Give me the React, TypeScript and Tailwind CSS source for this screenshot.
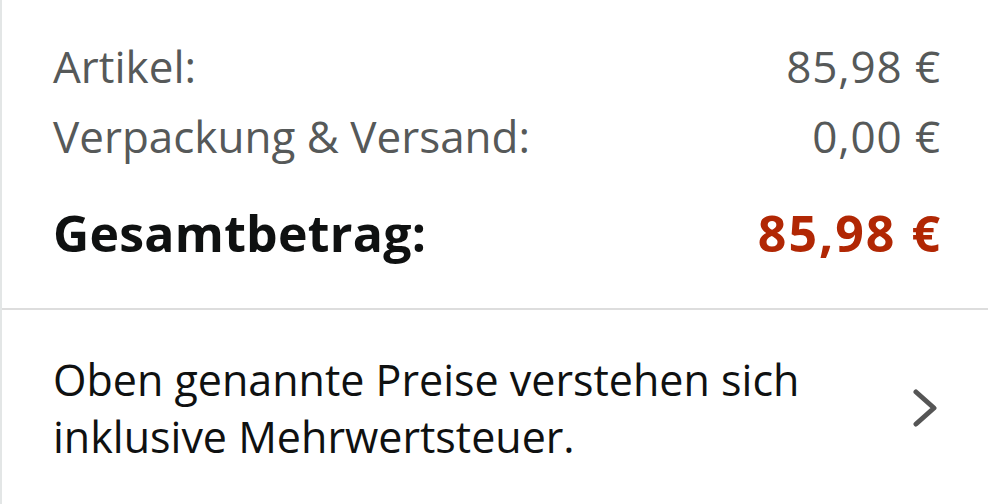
import React from 'react';

// Order summary block (prices incl. VAT)
const rows = [
  { label: 'Artikel:', value: '85,98 €' },
  { label: 'Verpackung & Versand:', value: '0,00 €' },
];

export default function App() {
  return (
    <div
      className="w-full h-[504px] bg-white border-l-2 border-[#e3e6e6] flex flex-col"
      style={{ fontFamily: '"Open Sans", "Noto Sans", sans-serif' }}
    >
      {/* Totals */}
      <div className="pl-[51px] pr-[48px] pt-[31px] pb-[45px]">
        {rows.map((row) => (
          <div key={row.label} className="flex justify-between text-[44px] leading-[70px] text-[#565959]">
            <span>{row.label}</span>
            <span className="tracking-[0.02em] -mr-[1px]">{row.value}</span>
          </div>
        ))}
        <div className="mt-[32px] flex justify-between text-[50px] leading-[60px] font-bold">
          <span className="text-[#0f1111] tracking-[0.005em]">Gesamtbetrag:</span>
          <span className="text-[#b12704] tracking-[0.04em] -mr-[2px]">85,98 €</span>
        </div>
      </div>

      <div className="h-[2px] bg-[#dddddd]" />

      {/* VAT note */}
      <div className="pl-[51px] pr-[51px] pt-[41px] flex items-center justify-between">
        <p className="text-[43px] leading-[57px] text-[#0f1111]">
          Oben genannte Preise verstehen sich
          <br />
          inklusive Mehrwertsteuer.
        </p>
        <svg width="24" height="38" viewBox="0 0 24 38" fill="none">
          <path d="M3 3 L21 19 L3 35" stroke="#555555" strokeWidth="5" strokeLinecap="round" strokeLinejoin="round" />
        </svg>
      </div>
    </div>
  );
}
